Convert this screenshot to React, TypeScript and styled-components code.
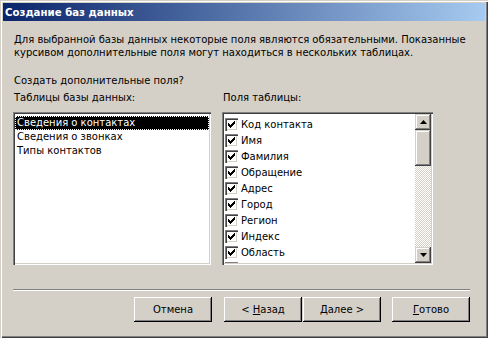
import styled, { createGlobalStyle } from "styled-components";

const GlobalStyle = createGlobalStyle`
  html, body {
    margin: 0;
    padding: 0;
    background: #d4d0c8;
  }
  body {
    font-family: "DejaVu Sans", "Liberation Sans", sans-serif;
    font-size: 10px;
    color: #000;
  }
`;

const Window = styled.div`
  width: 488px;
  height: 338px;
  box-sizing: border-box;
  padding: 3px;
  background: #d4d0c8;
  box-shadow: inset 1px 1px #d4d0c8, inset 2px 2px #fff, inset -1px -1px #404040,
    inset -2px -2px #808080;
  display: flex;
  flex-direction: column;
`;

const TitleBar = styled.div`
  height: 18px;
  flex: none;
  display: flex;
  align-items: center;
  padding-left: 2px;
  background: linear-gradient(to right, #0a246a, #a6caf0);
  color: #fff;
  font-weight: bold;
  font-size: 10.2px;
`;

const Body = styled.div`
  flex: 1;
  display: flex;
  flex-direction: column;
  padding: 12px 15px 0 10px;
`;

const Text = styled.div`
  line-height: 13px;
  padding-left: 1px;
  white-space: nowrap;
`;

const Question = styled(Text)`
  margin-top: 15px;
`;

const Columns = styled.div`
  display: flex;
  gap: 11px;
  margin-top: 4px;
`;

const Column = styled.div<{ $width: number }>`
  width: ${(p) => p.$width}px;
  display: flex;
  flex-direction: column;
`;

const Caption = styled(Text)`
  height: 13px;
  margin-bottom: 8px;
  padding-left: 1px;
`;

const ListBox = styled.div`
  height: 153px;
  box-sizing: border-box;
  padding: 2px;
  background: #fff;
  box-shadow: inset 1px 1px #808080, inset 2px 2px #404040, inset -1px -1px #fff,
    inset -2px -2px #d4d0c8;
  display: flex;
  overflow: hidden;
`;

const Items = styled.div<{ $top: number }>`
  flex: 1;
  display: flex;
  flex-direction: column;
  overflow: hidden;
  padding-top: ${(p) => p.$top}px;
`;

const Item = styled.div<{ $selected?: boolean }>`
  height: 14px;
  line-height: 14px;
  padding-left: 2px;
  white-space: nowrap;
  background: ${(p) => (p.$selected ? "#000" : "transparent")};
  color: ${(p) => (p.$selected ? "#fff" : "#000")};
  outline: ${(p) => (p.$selected ? "1px dotted #fff" : "none")};
  outline-offset: -1px;
`;

const CheckRow = styled.div`
  height: 16px;
  flex: none;
  display: flex;
  align-items: center;
  gap: 3px;
  padding-left: 1px;
  white-space: nowrap;
`;

const CheckBox = styled.span`
  width: 13px;
  height: 13px;
  flex: none;
  box-sizing: border-box;
  background: #fff;
  box-shadow: inset 1px 1px #808080, inset 2px 2px #404040, inset -1px -1px #fff,
    inset -2px -2px #d4d0c8;
  display: flex;
  align-items: center;
  justify-content: center;
`;

const ScrollBar = styled.div`
  width: 16px;
  flex: none;
  display: flex;
  flex-direction: column;
  background: repeating-conic-gradient(#fff 0 25%, #d4d0c8 0 50%) 0 0 / 2px 2px;
`;

const RaisedBox = styled.div`
  box-sizing: border-box;
  background: #d4d0c8;
  box-shadow: inset -1px -1px #404040, inset 1px 1px #d4d0c8,
    inset -2px -2px #808080, inset 2px 2px #fff;
`;

const ArrowButton = styled(RaisedBox)`
  height: 16px;
  flex: none;
  display: flex;
  align-items: center;
  justify-content: center;
`;

const Thumb = styled(RaisedBox)`
  height: 36px;
  flex: none;
`;

const Track = styled.div`
  flex: 1;
`;

const Separator = styled.div`
  margin-top: 24px;
  height: 0;
  border-top: 1px solid #808080;
  border-bottom: 1px solid #fff;
`;

const ButtonRow = styled.div`
  display: flex;
  justify-content: flex-end;
  margin-top: 6px;
`;

const Button = styled.button<{ $gap?: number }>`
  width: 78px;
  height: 25px;
  margin-left: ${(p) => p.$gap ?? 0}px;
  padding: 0;
  border: none;
  font: inherit;
  color: #000;
  background: #d4d0c8;
  box-shadow: inset -1px -1px #000, inset 1px 1px #fff, inset -2px -2px #808080,
    inset 2px 2px #d4d0c8;
  cursor: default;
  u {
    text-decoration: underline;
    text-underline-offset: 1px;
  }
`;

const Arrow = ({ up }: { up?: boolean }) => (
  <svg width="7" height="4" viewBox="0 0 7 4">
    <path d={up ? "M3.5 0 L7 4 L0 4 Z" : "M0 0 L7 0 L3.5 4 Z"} fill="#000" />
  </svg>
);

const Check = () => (
  <svg width="7" height="7" viewBox="0 0 7 7">
    <path
      d="M0 2h1v1h1v1h1v-1h1v-1h1v-1h1v-1h1v3h-1v1h-1v1h-1v1h-1v1h-1v-1h-1v-1h-1z"
      fill="#000"
    />
  </svg>
);

const tables = ["Сведения о контактах", "Сведения о звонках", "Типы контактов"];
const fields = [
  "Код контакта",
  "Имя",
  "Фамилия",
  "Обращение",
  "Адрес",
  "Город",
  "Регион",
  "Индекс",
  "Область",
];

export default function App() {
  return (
    <>
      <GlobalStyle />
      <Window>
        <TitleBar>Создание баз данных</TitleBar>
        <Body>
          <Text>
            Для выбранной базы данных некоторые поля являются обязательными. Показанные
            <br />
            курсивом дополнительные поля могут находиться в нескольких таблицах.
          </Text>
          <Question>Создать дополнительные поля?</Question>
          <Columns>
            <Column $width={198}>
              <Caption>Таблицы базы данных:</Caption>
              <ListBox>
                <Items $top={2}>
                  {tables.map((t, i) => (
                    <Item key={t} $selected={i === 0}>
                      {t}
                    </Item>
                  ))}
                </Items>
              </ListBox>
            </Column>
            <Column $width={211}>
              <Caption>Поля таблицы:</Caption>
              <ListBox>
                <Items $top={2}>
                  {fields.map((f) => (
                    <CheckRow key={f}>
                      <CheckBox>
                        <Check />
                      </CheckBox>
                      {f}
                    </CheckRow>
                  ))}
                  <CheckRow>
                    <CheckBox />
                  </CheckRow>
                </Items>
                <ScrollBar>
                  <ArrowButton>
                    <Arrow up />
                  </ArrowButton>
                  <Thumb />
                  <Track />
                  <ArrowButton>
                    <Arrow />
                  </ArrowButton>
                </ScrollBar>
              </ListBox>
            </Column>
          </Columns>
          <Separator />
          <ButtonRow>
            <Button>Отмена</Button>
            <Button $gap={12}>
              &lt; <u>Н</u>азад
            </Button>
            <Button $gap={1}>
              <u>Д</u>алее &gt;
            </Button>
            <Button $gap={11}>
              <u>Г</u>отово
            </Button>
          </ButtonRow>
        </Body>
      </Window>
    </>
  );
}
